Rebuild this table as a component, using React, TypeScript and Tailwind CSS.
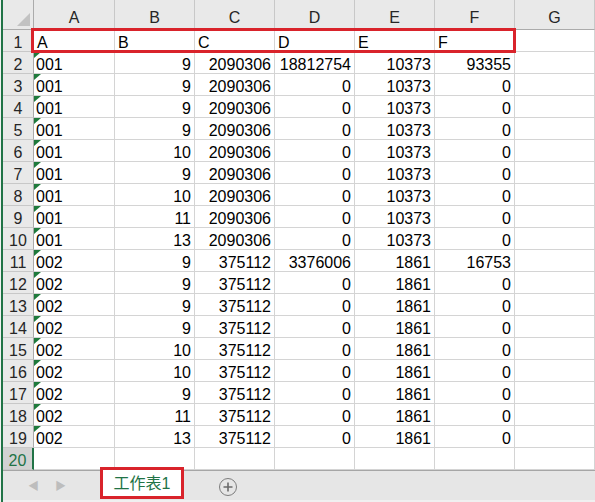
import React from "react";

const cols = ["A", "B", "C", "D", "E", "F", "G"];

type Row = [string, string, string, string, string, string];

const rows: Row[] = [
  ["001", "9", "2090306", "18812754", "10373", "93355"],
  ["001", "9", "2090306", "0", "10373", "0"],
  ["001", "9", "2090306", "0", "10373", "0"],
  ["001", "9", "2090306", "0", "10373", "0"],
  ["001", "10", "2090306", "0", "10373", "0"],
  ["001", "9", "2090306", "0", "10373", "0"],
  ["001", "10", "2090306", "0", "10373", "0"],
  ["001", "11", "2090306", "0", "10373", "0"],
  ["001", "13", "2090306", "0", "10373", "0"],
  ["002", "9", "375112", "3376006", "1861", "16753"],
  ["002", "9", "375112", "0", "1861", "0"],
  ["002", "9", "375112", "0", "1861", "0"],
  ["002", "9", "375112", "0", "1861", "0"],
  ["002", "10", "375112", "0", "1861", "0"],
  ["002", "10", "375112", "0", "1861", "0"],
  ["002", "9", "375112", "0", "1861", "0"],
  ["002", "11", "375112", "0", "1861", "0"],
  ["002", "13", "375112", "0", "1861", "0"],
];

const cell = "h-[22px] border-r border-b border-[#d4d4d4] bg-white leading-[25px] overflow-hidden whitespace-nowrap";
const rowHead = "h-[22px] border-r border-b border-r-[#ababab] border-b-[#c8c8c8] bg-[#e9e9e9] text-center leading-[25px] overflow-hidden text-[#262626]";

function GreenTri() {
  return (
    <svg className="absolute left-0 top-0" width="7" height="6" viewBox="0 0 7 6">
      <polygon points="0,0 7,0 0,6" fill="#1f7a3c" />
    </svg>
  );
}

export default function App() {
  return (
    <div
      className="relative flex h-[502px] w-[595px] overflow-hidden bg-white text-[16px] text-black"
      style={{ fontFamily: '"Liberation Sans", Arial, "Noto Sans CJK SC", sans-serif' }}
    >
      <div className="w-[1px] bg-[#f2f2f2]" />
      <div className="w-[2px] bg-[#217346]" />
      <div className="flex flex-1 flex-col">
        <div className="grid grid-cols-[31px_81px_80px_80px_80px_80px_80px_80px]">
          {/* header row */}
          <div className="relative h-[30px] border-r border-b border-[#ababab] bg-[#e9e9e9]">
            <svg className="absolute right-[3px] bottom-[3px]" width="13" height="13" viewBox="0 0 13 13">
              <polygon points="13,0 13,13 0,13" fill="#c2c2c2" />
            </svg>
          </div>
          {cols.map((c) => (
            <div
              key={c}
              className="flex h-[30px] items-end justify-center border-r border-b border-r-[#c8c8c8] border-b-[#ababab] bg-[#e9e9e9] leading-[22px] text-[#262626]"
            >
              {c}
            </div>
          ))}
          {/* row 1 */}
          <div className={rowHead}>1</div>
          {["A", "B", "C", "D", "E", "F"].map((t) => (
            <div key={t} className={`${cell} pl-[3px]`}>
              {t}
            </div>
          ))}
          <div className={cell} />
          {rows.map((r, i) => (
            <React.Fragment key={i}>
              <div className={rowHead}>{i + 2}</div>
              <div className={`${cell} relative pl-[2px]`}>
                <GreenTri />
                {r[0]}
              </div>
              {r.slice(1).map((v, j) => (
                <div key={j} className={`${cell} pr-[3px] text-right`}>
                  {v}
                </div>
              ))}
              <div className={cell} />
            </React.Fragment>
          ))}
          {/* row 20 */}
          <div className="h-[22px] overflow-hidden border-r-2 border-b border-r-[#217346] border-b-[#c8c8c8] bg-[#d2d2d2] text-center leading-[25px] text-[#217346]">
            20
          </div>
          {cols.map((c) => (
            <div key={c} className={cell} />
          ))}
        </div>
        {/* tab bar */}
        <div className="relative flex h-[32px] items-start border-t border-[#a6a6a6] bg-[#e6e6e6]">
          <div className="flex h-[30px] w-[100px] items-center gap-[16px] pl-[25px] text-[11px] text-[#bdbdbd]">
            <span>◀</span>
            <span>▶</span>
          </div>
          <div className="relative -mt-[1px] flex h-[28px] w-[78px] items-center justify-center bg-white text-[16px] text-[#217346]">
            工作表1
          </div>
          <div className="ml-[38px] mt-[7px] flex h-[18px] w-[18px] items-center justify-center rounded-full border border-[#7d7d7d]">
            <svg width="10" height="10" viewBox="0 0 10 10">
              <path d="M5 0.5V9.5M0.5 5H9.5" stroke="#6b6b6b" strokeWidth="1.6" />
            </svg>
          </div>
          <div className="absolute bottom-0 left-0 right-0 h-[2px] bg-[#f0f0f0]" />
        </div>
      </div>
      {/* annotation boxes */}
      <div className="absolute left-[31px] top-[28px] h-[25px] w-[485px] border-[3px] border-[#d9232b]" />
      <div className="absolute left-[100px] top-[467px] h-[32px] w-[84px] border-[3px] border-[#d9232b]" />
    </div>
  );
}
